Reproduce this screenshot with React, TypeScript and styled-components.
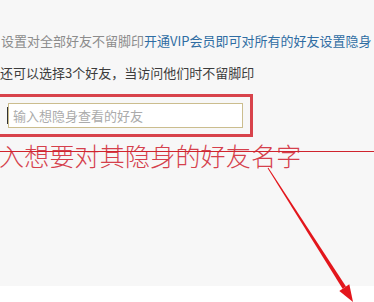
import styled, { createGlobalStyle } from "styled-components";

const GlobalStyle = createGlobalStyle`
  html, body {
    margin: 0;
    padding: 0;
    background: #ffffff;
  }
  body {
    font-family: "Noto Sans CJK SC", "Liberation Sans", sans-serif;
  }
`;

const Screen = styled.div`
  width: 374px;
  height: 302px;
  overflow: hidden;
  position: relative;
  background: #ffffff;
`;

const Panel = styled.div`
  height: 286px;
  box-sizing: border-box;
  padding-top: 33px;
  background: #f7f7f7;
  position: relative;
`;

const Notice = styled.div`
  display: flex;
  white-space: nowrap;
  font-size: 13px;
  line-height: 16px;
  margin-left: 1px;
  color: #8c8c8c;
`;

const VipLink = styled.a`
  color: #2f6da3;
  text-decoration: none;
  cursor: pointer;
`;

const Quota = styled.div`
  margin-top: 16px;
  font-size: 13px;
  line-height: 16px;
  white-space: nowrap;
  color: #3c3c3c;
`;

const HighlightBox = styled.div`
  margin-top: 13px;
  margin-left: -3px;
  width: 256px;
  box-sizing: border-box;
  border: 3px solid #d8434b;
  padding: 6px 7px 6px 8px;
`;

const FriendInput = styled.input`
  display: block;
  width: 100%;
  height: 25px;
  box-sizing: border-box;
  border: 1px solid #cbbd8e;
  background: #ffffff;
  padding: 0 0 0 4px;
  font-family: "Noto Sans CJK SC", "Liberation Sans", sans-serif;
  font-size: 13px;
  color: #333;
  outline: none;

  &::placeholder {
    color: #ababab;
  }
`;

const Caret = styled.span`
  position: absolute;
  top: 107px;
  left: 7px;
  width: 1px;
  height: 17px;
  background: #333;
`;

const Annotation = styled.div`
  position: absolute;
  top: 140px;
  left: -1px;
  font-size: 25px;
  line-height: 30px;
  font-weight: 300;
  letter-spacing: 0.2px;
  color: #d5404c;
  white-space: nowrap;
`;

const StrikeLine = styled.div`
  position: absolute;
  top: 151px;
  left: 0;
  right: 0;
  height: 1px;
  background: #d0242d;
`;

const ArrowLayer = styled.svg`
  position: absolute;
  top: 0;
  left: 0;
  pointer-events: none;
`;

const Footer = styled.div`
  height: 16px;
  background: #ffffff;
`;

const Arrow = () => (
  <ArrowLayer width={374} height={302} viewBox="0 0 374 302">
    <polygon
      points="268.4,167.7 267.6,168.3 342.6,288.7 346,286.5"
      fill="#e3161c"
    />
    <polygon points="353,302 349.3,284.3 339.3,290.9" fill="#e3161c" />
  </ArrowLayer>
);

export default function App() {
  return (
    <Screen>
      <GlobalStyle />
      <Panel>
        <Notice>
          设置对全部好友不留脚印
          <VipLink>开通VIP会员即可对所有的好友设置隐身</VipLink>
        </Notice>
        <Quota>还可以选择3个好友，当访问他们时不留脚印</Quota>
        <HighlightBox>
          <FriendInput placeholder="输入想隐身查看的好友" />
        </HighlightBox>
        <Caret />
        <Annotation>入想要对其隐身的好友名字</Annotation>
        <StrikeLine />
        <Arrow />
      </Panel>
      <Footer />
    </Screen>
  );
}
